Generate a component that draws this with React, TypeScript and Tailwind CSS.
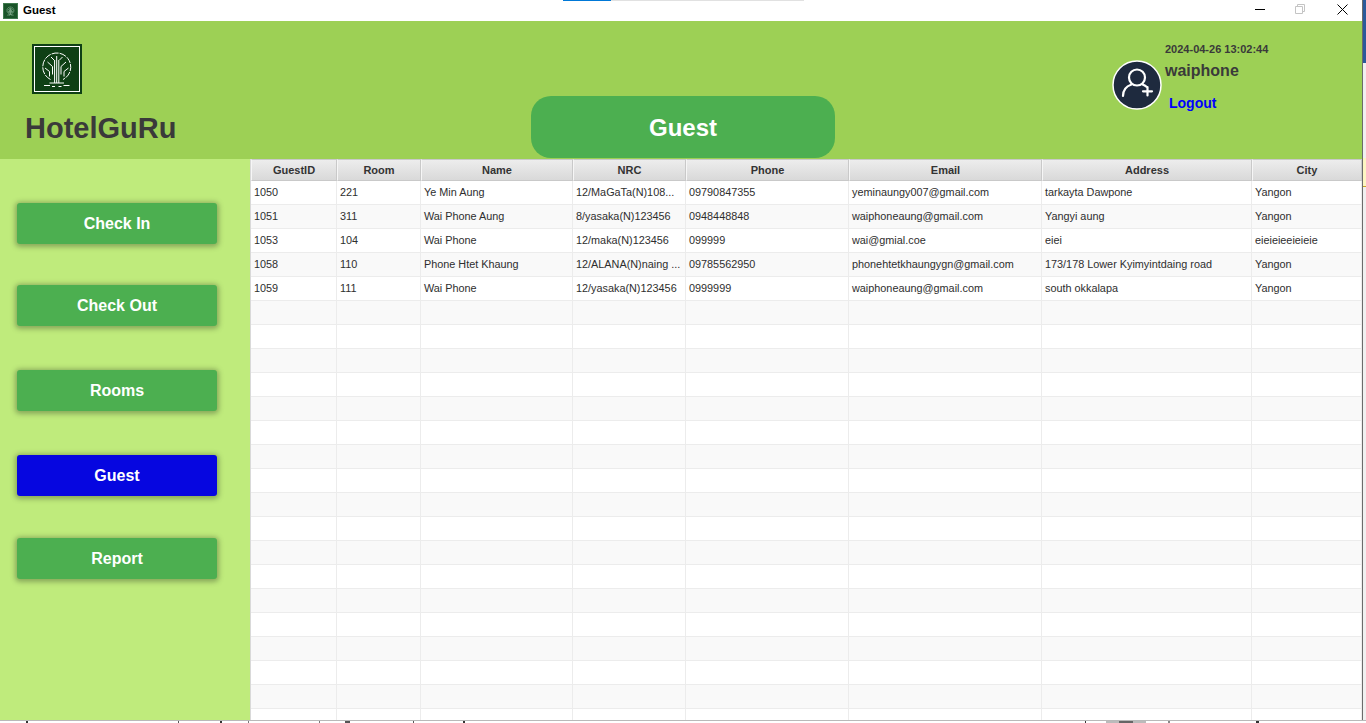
const cols = ["GuestID", "Room", "Name", "NRC", "Phone", "Email", "Address", "City"];
const data = [
  ["1050", "221", "Ye Min Aung", "12/MaGaTa(N)108...", "09790847355", "yeminaungy007@gmail.com", "tarkayta Dawpone", "Yangon"],
  ["1051", "311", "Wai Phone Aung", "8/yasaka(N)123456", "0948448848", "waiphoneaung@gmail.com", "Yangyi aung", "Yangon"],
  ["1053", "104", "Wai Phone", "12/maka(N)123456", "099999", "wai@gmial.coe", "eiei", "eieieieeieieie"],
  ["1058", "110", "Phone Htet Khaung", "12/ALANA(N)naing ...", "09785562950", "phonehtetkhaungygn@gmail.com", "173/178 Lower Kyimyintdaing road", "Yangon"],
  ["1059", "111", "Wai Phone", "12/yasaka(N)123456", "0999999", "waiphoneaung@gmail.com", "south okkalapa", "Yangon"],
];
const rows = [...data, ...Array.from({ length: 18 }, () => ["", "", "", "", "", "", "", ""])];
const gridCols = "grid grid-cols-[86px_84px_152px_113px_163px_193px_210px_110px]";

function Tree({ color, width }: { color: string; width: number }) {
  return (
    <svg viewBox="0 0 44 44" className="w-full h-full block" fill="none" stroke={color} strokeWidth={width}>
      <path d="M15.500 32.500A14 14 0 1 1 28 32.500" strokeDasharray="7 1" />
      <path d="M21.700 9v27M19.600 13v23M23.800 13v23" />
      <path d="M12.500 15l5 4.500v8M31 15l-5 4.500v8M10 21l4.500 3.500v5M33.500 21l-4.500 3.500v5M16 10l3 3M27.500 10l-3 3" />
      <path d="M14.500 36h14.500M9 38.500h6M28.500 38.500h6M17 39.500h3M23.500 39.500h3" />
    </svg>
  );
}

function Logo() {
  return (
    <div className="w-[50px] h-[50px] bg-[#0f4015] p-[2px]">
      <div className="w-full h-full border border-white">
        <Tree color="#fff" width={1} />
      </div>
    </div>
  );
}

function Avatar() {
  return (
    <svg viewBox="0 0 50 50" className="w-[50px] h-[50px] block">
      <circle cx="25" cy="25" r="24" fill="#1e2a3e" stroke="#fff" strokeWidth="1.500" />
      <g fill="none" stroke="#fff" strokeWidth="2.200" strokeLinecap="round">
        <circle cx="25" cy="17.500" r="8" />
        <path d="M11 36c0-6.500 4-10 8.500-11.500M30.500 24.500c1.500.5 3 1.300 4 2.300" />
        <path d="M35.500 27v8.500M31 31.300h9" />
      </g>
    </svg>
  );
}

function NavButton({ label, active, mt }: { label: string; active?: boolean; mt: string }) {
  return (
    <button
      className={`w-[200px] h-[41px] ml-[17px] block rounded-[3px] text-white text-[16px] font-bold shadow-[0_1px_5px_2px_rgba(70,90,50,0.45)] ${mt} ${active ? "bg-[#0606e0]" : "bg-[#4caf50]"}`}
    >
      {label}
    </button>
  );
}

export default function App() {
  return (
    <div className="w-[1366px] h-[723px] overflow-hidden bg-white flex flex-col font-['Liberation_Sans',sans-serif] text-[#333]">
      <div className="h-[720px] shrink-0 flex">
        <div className="w-[1362px] shrink-0 flex flex-col">
          {/* title bar */}
          <div className="h-[21px] shrink-0 bg-white flex items-center relative">
            <div className="ml-[3px] w-[15px] h-[16px] bg-[#1a5429] p-[1px] border border-[#3f7a4e]">
              <Tree color="#8fb79a" width={2.5} />
            </div>
            <span className="ml-[5px] text-[11.500px] font-bold text-black">Guest</span>
            <div className="absolute left-[563px] top-0 w-[48px] h-px bg-[#0078d7]" />
            <div className="absolute left-[611px] top-0 w-[193px] h-px bg-[#e1e1e1]" />
            <div className="ml-auto flex items-center mr-[14px] mb-[3px]">
              <svg width="10" height="11" viewBox="0 0 10 11"><path d="M0 5.500h10" stroke="#000" /></svg>
              <svg className="ml-[30px]" width="10" height="10" viewBox="0 0 10 10" fill="none" stroke="#c4c4c4"><path d="M.5 2.500h7v7h-7zM2.500 2.500v-2h7v7h-2" /></svg>
              <svg className="ml-[32px]" width="11" height="11" viewBox="0 0 11 11" fill="none" stroke="#000"><path d="M.5.5l10 10M10.500.5l-10 10" /></svg>
            </div>
          </div>

          {/* header */}
          <div className="h-[138px] shrink-0 bg-[#9dd055] flex">
            <div className="w-[531px] shrink-0 pl-[25px] pt-[23px]">
              <div className="ml-[7px]"><Logo /></div>
              <div className="mt-[16px] text-[29px] leading-[36px] font-bold text-[#3a3a3a]">HotelGuRu</div>
            </div>
            <div className="w-[304px] h-[62px] mt-[75px] pt-[2px] rounded-[20px] bg-[#4caf50] flex items-center justify-center text-white text-[24px] font-bold">
              Guest
            </div>
            <div className="ml-[277px] pt-[39px] flex">
              <div><Avatar /></div>
              <div className="ml-[3px] -mt-[18px]">
                <div className="text-[11px] leading-[14px] font-bold text-[#3a3a3a]">2024-04-26 13:02:44</div>
                <div className="mt-[6px] text-[16px] leading-[18px] font-bold text-[#3a3a3a]">waiphone</div>
                <div className="mt-[15px] ml-[4px] text-[14px] leading-[16px] font-bold text-[#0000ff]">Logout</div>
              </div>
            </div>
          </div>

          <div className="flex-1 flex min-h-0">
            {/* sidebar */}
            <div className="w-[251px] shrink-0 bg-[#bfeb7c] pt-[44px] border-r border-[#d9d9d9]">
              <NavButton label="Check In" mt="mt-0" />
              <NavButton label="Check Out" mt="mt-[41px]" />
              <NavButton label="Rooms" mt="mt-[44px]" />
              <NavButton label="Guest" active mt="mt-[44px]" />
              <NavButton label="Report" mt="mt-[42px]" />
            </div>
            {/* table */}
            <div className="flex-1 overflow-hidden bg-white">
              <div className={`${gridCols} h-[22px]`}>
                {cols.map((c) => (
                  <div key={c} className="bg-gradient-to-b from-[#ededed] to-[#d9d9d9] border-l border-l-[#f6f6f6] border-r border-y border-[#c9c9c9] flex items-center justify-center text-[11px] font-bold text-[#333]">
                    {c}
                  </div>
                ))}
              </div>
              {rows.map((r, i) => (
                <div key={i} className={`${gridCols} h-[24px] ${i % 2 ? "bg-[#f9f9f9]" : "bg-white"}`}>
                  {r.map((v, j) => (
                    <div key={j} className="border-r border-b border-[#ececec] pl-[3px] flex items-center text-[10.850px] text-[#2e2e2e] whitespace-nowrap overflow-hidden">
                      {v}
                    </div>
                  ))}
                </div>
              ))}
            </div>
          </div>
        </div>

        {/* sliver of the window behind */}
        <div className="flex-1 flex flex-col border-l border-[#6b6b6b] bg-[#f0f0f0]">
          <div className="h-[63px] bg-[#2a5a9a]" />
          <div className="h-[95px]" />
          <div className="h-[29px] bg-[#fdf6c3] border-b border-[#c9a227]" />
        </div>
      </div>

      {/* desktop peeking below the window */}
      <div className="h-[3px] shrink-0 bg-white border-t border-[#b9b9b9] flex">
        <div className="ml-[26px] w-[2px] bg-[#333]" />
        <div className="ml-[150px] w-px bg-[#555]" />
        <div className="ml-[41px] w-[2px] bg-[#333]" />
        <div className="ml-[26px] w-px bg-[#777]" />
        <div className="ml-[70px] w-px bg-[#777]" />
        <div className="ml-[25px] w-[5px] bg-[#555]" />
        <div className="ml-[63px] w-px bg-[#555]" />
        <div className="ml-[49px] w-[2px] bg-[#333]" />
        <div className="ml-[620px] w-px bg-[#333]" />
        <div className="ml-[20px] w-[13px] bg-[#bbb]" />
        <div className="w-[14px] bg-[#666]" />
        <div className="w-[13px] bg-[#bbb]" />
        <div className="ml-[22px] w-[2px] bg-[#888]" />
        <div className="ml-[86px] w-[3px] bg-[#333]" />
      </div>
    </div>
  );
}
